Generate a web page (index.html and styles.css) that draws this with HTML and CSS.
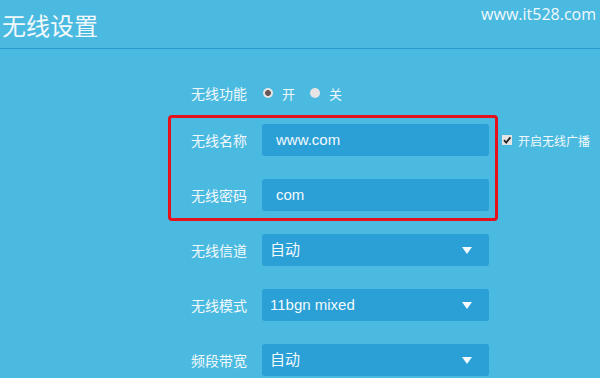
FILE: index.html
```html
<!DOCTYPE html>
<html lang="zh-CN">

<head>
    <meta charset="UTF-8">
    <title>无线设置</title>
    <link rel="stylesheet" href="styles.css">
</head>

<body>
    <header>
        <h1>无线设置</h1>
        <span class="site">www.it528.com</span>
    </header>

    <div class="form">
        <!-- annotation box round name and password -->
        <div class="mark"></div>

        <div class="row switch">
            <span class="label">无线功能</span>
            <span class="radio on"></span><span class="opt">开</span>
            <span class="radio"></span><span class="opt">关</span>
        </div>

        <div class="row">
            <span class="label">无线名称</span>
            <div class="field">www.com</div>
            <span class="check">
                <svg width="10" height="10" viewBox="0 0 10 10"><rect width="10" height="10" fill="#e4e4e4"/><path d="M2 5.2 L4.2 7.6 L8.4 2.4" stroke="#222" stroke-width="1.8" fill="none"/></svg>
                开启无线广播
            </span>
        </div>

        <div class="row">
            <span class="label">无线密码</span>
            <div class="field">com</div>
        </div>

        <div class="row">
            <span class="label">无线信道</span>
            <div class="field select">自动<i class="arrow"></i></div>
        </div>

        <div class="row">
            <span class="label">无线模式</span>
            <div class="field select">11bgn mixed<i class="arrow"></i></div>
        </div>

        <div class="row">
            <span class="label">频段带宽</span>
            <div class="field select">自动<i class="arrow"></i></div>
        </div>
    </div>
</body>

</html>
```
FILE: styles.css
```css
* {
    margin: 0;
    padding: 0;
    box-sizing: border-box;
}

html,
body {
    height: 100%;
    overflow: hidden;
}

body {
    background-color: #4bbae0;
    color: #f2f9fc;
    font-family: "Liberation Sans", "Noto Sans CJK SC", sans-serif;
}

header {
    height: 49px;
    display: flex;
    justify-content: space-between;
    border-bottom: 1px solid #2a98d1;
}

h1 {
    font-family: "Noto Sans CJK SC", sans-serif;
    font-weight: normal;
    font-size: 24px;
    line-height: 50px;
    padding-left: 2px;
}

.site {
    font-family: "Open Sans", sans-serif;
    font-size: 16px;
    line-height: 28px;
    padding-right: 4px;
}

.form {
    position: relative;
    margin-left: 191px;
    padding-top: 28px;
}

.mark {
    position: absolute;
    left: -23px;
    top: 66px;
    width: 330px;
    height: 106px;
    border: 3px solid #e5121b;
    border-radius: 4px;
}

.row {
    display: flex;
    align-items: center;
    height: 32px;
    margin-bottom: 23px;
}

.row.switch {
    margin-bottom: 15px;
}

.row:last-child {
    margin-bottom: 0;
}

.label {
    width: 71px;
    font-family: "Noto Sans CJK SC", sans-serif;
    font-size: 14px;
}

.radio {
    width: 10px;
    height: 10px;
    border-radius: 50%;
    background-color: #e6e4e4;
    margin-left: 1px;
    margin-right: 9px;
}

.radio.on {
    background: radial-gradient(circle, #6a5858 0 2.6px, #e6e4e4 3.2px);
}

.opt {
    font-family: "Noto Sans CJK SC", sans-serif;
    font-size: 13px;
    margin-right: 14px;
}

.field {
    width: 227px;
    height: 32px;
    background-color: #2aa0d7;
    border-radius: 3px;
    padding-left: 14px;
    font-size: 15px;
    line-height: 32px;
}

.select {
    display: flex;
    justify-content: space-between;
    align-items: center;
    padding-left: 8px;
    padding-right: 17px;
}

.arrow {
    width: 0;
    height: 0;
    border-left: 5px solid transparent;
    border-right: 5px solid transparent;
    border-top: 7px solid #f4fafd;
}

.check {
    display: flex;
    align-items: center;
    margin-left: 13px;
    font-family: "Noto Sans CJK SC", sans-serif;
    font-size: 12px;
}

.check svg {
    margin-right: 6px;
}
```
